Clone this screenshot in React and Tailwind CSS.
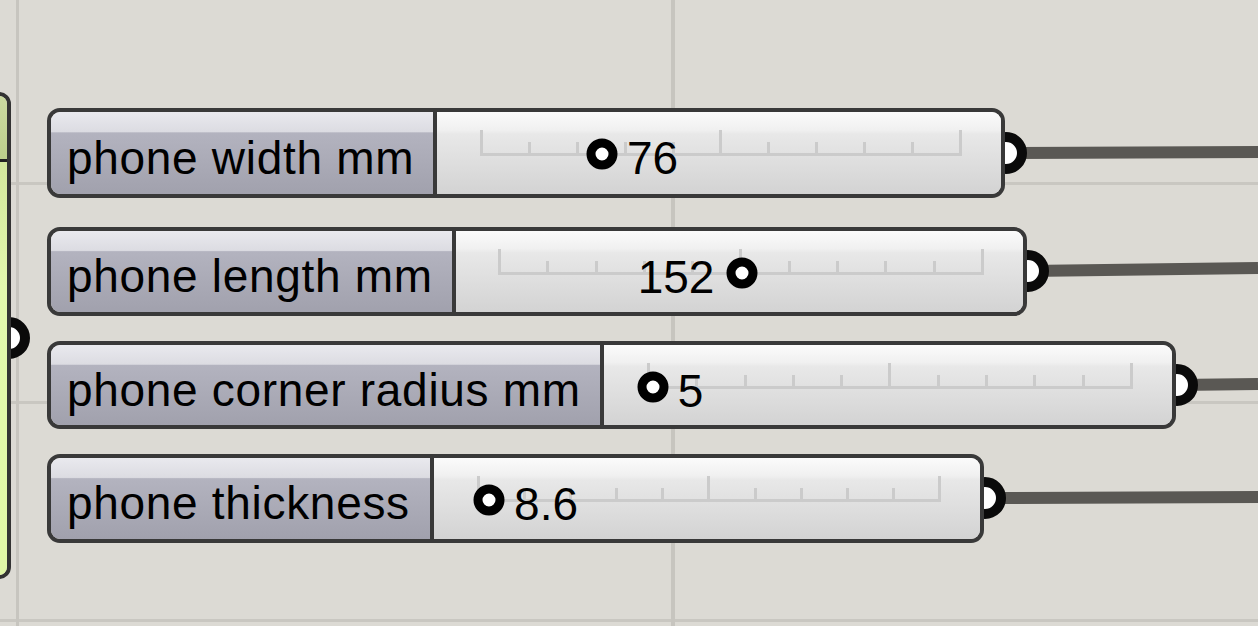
import React from 'react';

const sliders = [
    { label: 'phone width mm', value: '76', pos: 'left-[47px] top-[108px] w-[958px] h-[90px]', labelW: 'w-[386px]', pad: 'pl-[43px] pr-[39px]', pct: 25.3, side: 'right' },
    { label: 'phone length mm', value: '152', pos: 'left-[47px] top-[227px] w-[980px] h-[89px]', labelW: 'w-[405px]', pad: 'pl-[42px] pr-[39px]', pct: 50.3, side: 'left' },
    { label: 'phone corner radius mm', value: '5', pos: 'left-[47px] top-[341px] w-[1129px] h-[88px]', labelW: 'w-[553px]', pad: 'pl-[43px] pr-[39px]', pct: 1.2, side: 'right' },
    { label: 'phone thickness', value: '8.6', pos: 'left-[47px] top-[454px] w-[937px] h-[89px]', labelW: 'w-[383px]', pad: 'pl-[43px] pr-[39px]', pct: 2.6, side: 'right' },
];

// grip centre + where the wire leaves the screen
const wires = [
    { x: 1006, y: 153, y2: 152 },
    { x: 1028, y: 271, y2: 268 },
    { x: 1177, y: 385, y2: 384 },
    { x: 985, y: 498, y2: 497 },
];

const ticks = [0, 1, 2, 3, 4, 5, 6, 7, 8, 9, 10];

const Slider = ({ s }) => (
    <div className={`absolute ${s.pos} flex border-[4px] border-[#393939] rounded-[13px] overflow-hidden`}>
        <div className={`${s.labelW} shrink-0 flex items-center pl-[16px] pt-[9px] border-r-[4px] border-[#393939] bg-[linear-gradient(to_bottom,#e9e9ee_0%,#dcdce2_24%,#b3b3bf_25.5%,#a1a1ad_100%)]`}>
            <span className="text-[46px] leading-[46px] tracking-[0.015em] text-black whitespace-nowrap">{s.label}</span>
        </div>
        <div className={`flex-1 ${s.pad} pt-[18px] bg-[linear-gradient(to_bottom,#fbfbfb_0%,#f0f0f0_22%,#e8e8e8_27%,#d3d3d3_100%)]`}>
            <div className="relative h-[26px] flex justify-between items-end border-b-[3px] border-[#cbcbcb]">
                {ticks.map((t) => (
                    <div key={t} className={`w-[3px] bg-[#cbcbcb] ${t % 5 === 0 ? 'h-[23px]' : 'h-[11px]'}`} />
                ))}
                <div
                    className="absolute top-[24px] -translate-x-1/2 -translate-y-1/2 w-[31px] h-[31px] rounded-full border-[9px] border-black bg-white"
                    style={{ left: `${s.pct}%` }}
                />
                {s.side === 'right' ? (
                    <span
                        className="absolute top-[5px] text-[46px] leading-[46px] text-black whitespace-nowrap"
                        style={{ left: `calc(${s.pct}% + 25px)` }}
                    >
                        {s.value}
                    </span>
                ) : (
                    <span
                        className="absolute top-[5px] -translate-x-full text-[46px] leading-[46px] text-black whitespace-nowrap"
                        style={{ left: `calc(${s.pct}% - 28px)` }}
                    >
                        {s.value}
                    </span>
                )}
            </div>
        </div>
    </div>
);

export default function App() {
    return (
        <div className="relative w-[1258px] h-[626px] overflow-hidden bg-[#dcdad4] bg-[linear-gradient(to_right,transparent_16px,#c7c5bf_16px,#c7c5bf_19px,transparent_19px,transparent_671px,#c7c5bf_671px,#c7c5bf_675px,transparent_675px),linear-gradient(to_bottom,transparent_182px,#c9c7c1_182px,#c9c7c1_185px,transparent_185px,transparent_401px,#c9c7c1_401px,#c9c7c1_404px,transparent_404px,transparent_619px,#c9c7c1_619px,#c9c7c1_622px,transparent_622px)] font-['Liberation_Sans',Arial,sans-serif]">
            {/* wires + grips */}
            <svg className="absolute inset-0" width="1258" height="626" viewBox="0 0 1258 626">
                {wires.map((w, i) => (
                    <line key={i} x1={w.x} y1={w.y} x2="1258" y2={w.y2} stroke="#5a5854" strokeWidth="12" />
                ))}
                {wires.map((w, i) => (
                    <circle key={'g' + i} cx={w.x} cy={w.y} r="16" fill="#fff" stroke="#0a0a0a" strokeWidth="10" />
                ))}
                <circle cx="9" cy="338" r="16" fill="#fff" stroke="#0a0a0a" strokeWidth="10" />
            </svg>

            {/* upstream component, mostly off screen */}
            <div className="absolute left-[-24px] top-[92px] w-[35px] h-[487px] border-[4px] border-[#333] rounded-[12px] overflow-hidden flex flex-col">
                <div className="h-[66px] bg-[linear-gradient(to_bottom,#cbdaa0,#bccf8c)] border-b-[3px] border-[#222]" />
                <div className="flex-1 bg-[linear-gradient(to_bottom,#d3e89c,#e2f7ae_30%,#e0f7a6)]" />
            </div>

            {sliders.map((s) => (
                <Slider key={s.label} s={s} />
            ))}
        </div>
    );
}
